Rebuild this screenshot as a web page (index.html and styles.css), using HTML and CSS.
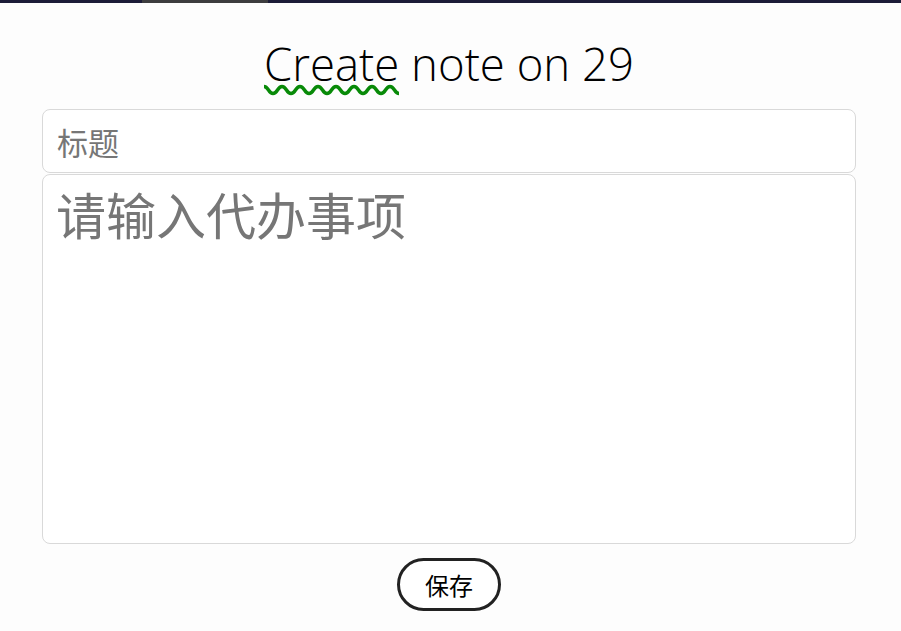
FILE: index.html
```html
<!DOCTYPE html>
<html lang="zh">
<head>
<meta charset="utf-8">
<title>Create note</title>
<link rel="stylesheet" href="styles.css">
</head>
<body>
<div class="topbar"><div class="topbar-seg"></div></div>
<main class="page">
  <h1 class="heading"><span class="spell">Create</span> note on 29</h1>
  <form class="note-form">
    <input class="title-input" type="text" placeholder="标题">
    <textarea class="body-input" placeholder="请输入代办事项"></textarea>
    <button class="save-btn" type="button">保存</button>
  </form>
</main>
</body>
</html>
```
FILE: styles.css
```css
html, body {
  margin: 0;
  padding: 0;
  background: #fdfdfd;
}
body {
  font-family: "Open Sans", "Noto Sans CJK SC", sans-serif;
  height: 631px;
  overflow: hidden;
}
.topbar {
  height: 3px;
  background: #1c1c38;
  display: flex;
}
.topbar-seg {
  margin-left: 142px;
  width: 126px;
  background: #3d3d3f;
}
.page {
  margin-left: 42px;
  width: 814px;
  display: flex;
  flex-direction: column;
}
.heading {
  margin: 0;
  height: 106px;
  box-sizing: border-box;
  padding-top: 30px;
  text-align: center;
  font-weight: 300;
  font-size: 45.5px;
  line-height: 60px;
  color: #000;
}
.spell {
  padding-bottom: 3px;
  background-image: url("data:image/svg+xml,%3Csvg xmlns='http://www.w3.org/2000/svg' width='18' height='14' viewBox='0 0 18 14'%3E%3Cpath d='M0 3.5 C4.5 3.5 4.5 10.5 9 10.5 C13.5 10.5 13.5 3.5 18 3.5' fill='none' stroke='%23088a08' stroke-width='3.5'/%3E%3C/svg%3E");
  background-repeat: repeat-x;
  background-position: left bottom;
  background-size: 18px 14px;
}
.note-form {
  display: flex;
  flex-direction: column;
}
.title-input,
.body-input {
  box-sizing: border-box;
  width: 100%;
  margin: 0;
  border: 1px solid #d9d9d9;
  border-radius: 8px;
  background: #fff;
  font-family: "Noto Sans CJK SC", sans-serif;
  color: #000;
  outline: none;
}
.title-input {
  height: 64px;
  padding: 0 14px;
  font-size: 31px;
}
.body-input {
  height: 370px;
  margin-top: 1px;
  padding: 2px 13px;
  font-size: 50px;
  line-height: 72px;
  resize: none;
}
.title-input::placeholder,
.body-input::placeholder {
  color: #767676;
}
.save-btn {
  align-self: center;
  margin-top: 14px;
  box-sizing: border-box;
  width: 104px;
  height: 53px;
  border: 3px solid #222;
  border-radius: 27px;
  background: #fff;
  font-family: "Noto Sans CJK SC", sans-serif;
  font-size: 24px;
  color: #000;
  padding: 0;
}
```
